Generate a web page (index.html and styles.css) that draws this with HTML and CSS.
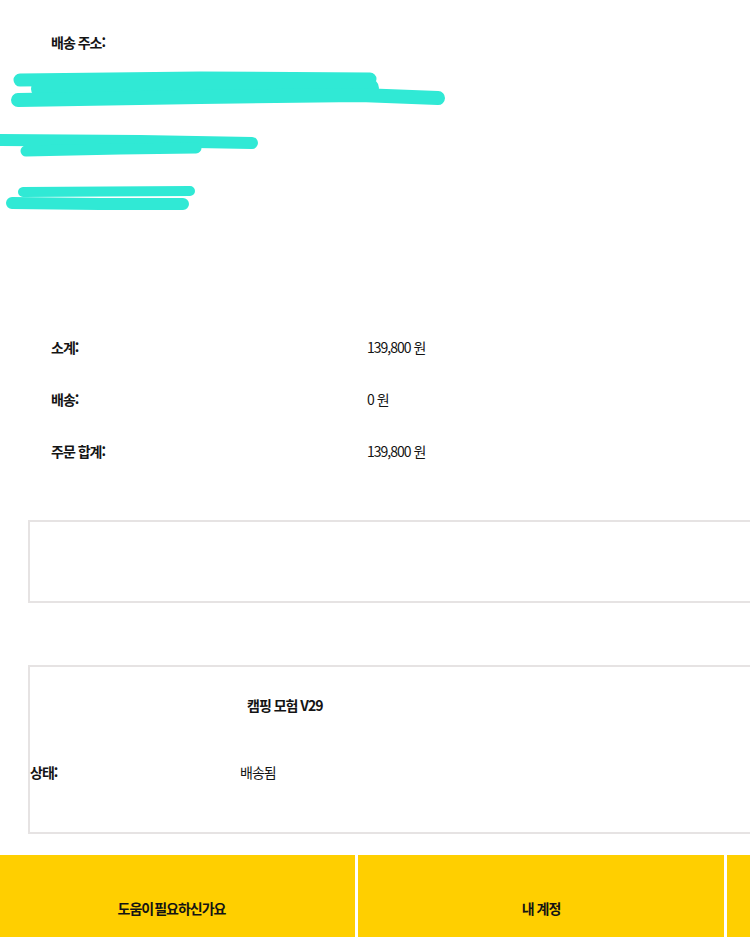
FILE: index.html
```html
<!DOCTYPE html>
<html lang="ko">
<head>
<meta charset="utf-8">
<link rel="stylesheet" href="styles.css">
</head>
<body>
<div class="page">
  <section class="address">
    <h2 class="heading">배송 주소:</h2>
    <svg class="redact" width="450" height="160" viewBox="0 60 450 160" xmlns="http://www.w3.org/2000/svg">
      <g fill="none" stroke="#30E9D5" stroke-linecap="round" stroke-linejoin="round">
        <polyline points="20,80 200,78 370,79" stroke-width="13"/>
        <polyline points="40,89 370,88" stroke-width="18"/>
        <polyline points="18,100 200,97 360,95 438,98" stroke-width="14"/>
        <polyline points="0,140 140,141 252,143" stroke-width="12"/>
        <polyline points="26,151 120,149 196,148" stroke-width="11"/>
        <polyline points="23,192 190,191" stroke-width="10"/>
        <polyline points="12,203 100,204 183,204" stroke-width="12"/>
      </g>
    </svg>
  </section>

  <section class="summary">
    <div class="row"><span class="label">소계:</span><span class="value">139,800 원</span></div>
    <div class="row"><span class="label">배송:</span><span class="value">0 원</span></div>
    <div class="row"><span class="label">주문 합계:</span><span class="value">139,800 원</span></div>
  </section>

  <div class="box box-empty"></div>

  <div class="box box-item">
    <div class="item-title">캠핑 모험 V29</div>
    <div class="status"><span class="status-label">상태:</span><span class="status-value">배송됨</span></div>
  </div>

  <footer class="footer">
    <div class="foot-col foot-help">도움이 필요하신가요</div>
    <div class="foot-col">내 계정</div>
    <div class="foot-col"></div>
  </footer>
</div>
</body>
</html>
```

FILE: styles.css
```css
html, body {
  margin: 0;
  padding: 0;
  background: #ffffff;
}
body {
  font-family: "Noto Sans CJK KR", "Noto Sans", sans-serif;
  color: #141414;
  font-size: 14px;
  line-height: 20px;
  letter-spacing: -1px;
  overflow: hidden;
}
.page {
  width: 750px;
  overflow: hidden;
}
.address {
  padding-top: 32px;
}
.heading {
  margin: 0 0 0 51px;
  font-size: 14px;
  font-weight: 700;
  line-height: 20px;
}
.redact {
  display: block;
  margin-top: 8px;
}
.summary {
  margin-top: 101px;
  padding-left: 51px;
}
.row {
  display: flex;
  align-items: center;
  height: 52px;
}
.label {
  width: 316px;
  font-weight: 700;
}
.value {
  font-weight: 400;
}
.box {
  margin-left: 28px;
  width: 800px;
  border: 2px solid #e6e3e3;
  box-sizing: border-box;
}
.box-empty {
  margin-top: 43px;
  height: 83px;
}
.box-item {
  margin-top: 62px;
  height: 169px;
  padding-top: 28px;
}
.item-title {
  padding-left: 217px;
  font-weight: 700;
}
.status {
  display: flex;
  margin-top: 47px;
}
.status-label {
  width: 210px;
  font-weight: 700;
}
.footer {
  margin-top: 21px;
  display: grid;
  grid-template-columns: 355px 366px 366px;
  column-gap: 3px;
  height: 110px;
}
.foot-col {
  background: #FFCF00;
  text-align: center;
  padding-top: 43px;
  font-weight: 700;
}
.foot-help {
  padding-right: 12px;
  word-spacing: -2px;
}
```
